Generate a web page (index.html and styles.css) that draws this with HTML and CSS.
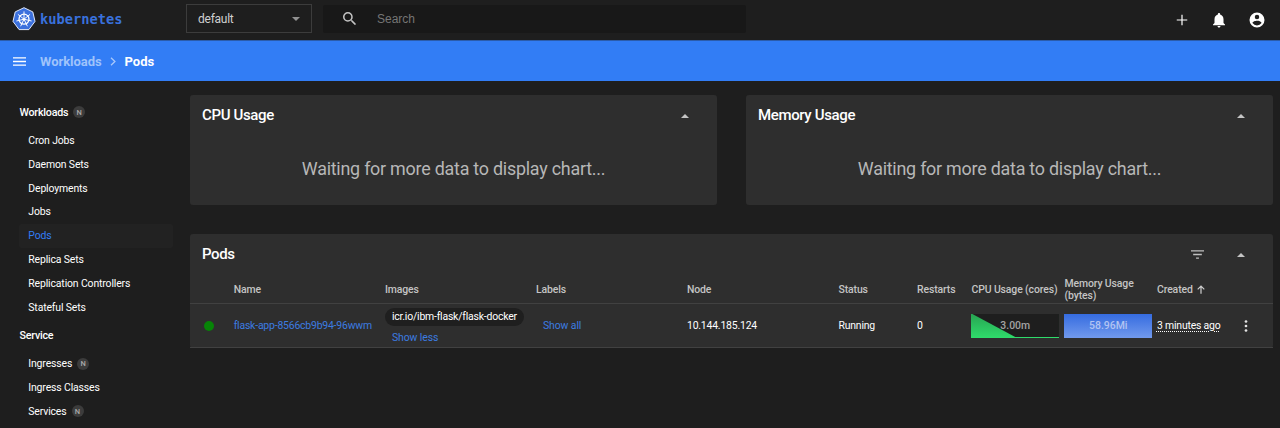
FILE: index.html
```html
<!DOCTYPE html>
<html lang="en">
<head>
<meta charset="utf-8">
<title>Kubernetes Dashboard</title>
<link rel="stylesheet" href="styles.css">
</head>
<body>
<header class="topbar">
  <div class="brand">
    <svg class="brand-logo" viewBox="0 0 24 24">
      <path d="M12 .7 20.8 4.9 23 14.4 16.9 22.6H7.1L1 14.4 3.2 4.9Z" fill="#3b70dd" stroke="#dfe8fb" stroke-width="1" stroke-linejoin="round"/>
      <g stroke="#fff" fill="none" stroke-linecap="round">
        <circle cx="12" cy="12.2" r="5" stroke-width="1.3"/>
        <path stroke-width=".95" d="M12 11V4.8M12.9 11.5 17.8 7.6M13.1 12.5 19.2 13.9M12.5 13.2 15.2 18.9M11.5 13.2 8.8 18.9M10.9 12.5 4.8 13.9M11.1 11.5 6.2 7.6"/>
      </g>
      <circle cx="12" cy="12.2" r="1.3" fill="#fff"/>
    </svg>
    <span class="brand-name">kubernetes</span>
  </div>
  <div class="namespace"><span>default</span><i class="caret-down"></i></div>
  <div class="search">
    <svg class="icon-search" viewBox="3 3 18 18"><path fill="#c4c4c4" d="M15.5 14h-.79l-.28-.27A6.47 6.47 0 0 0 16 9.5 6.5 6.5 0 1 0 9.5 16c1.61 0 3.09-.59 4.23-1.57l.27.28v.79l5 4.99L20.49 19zm-6 0C7.01 14 5 11.99 5 9.5S7.01 5 9.5 5 14 7.01 14 9.5 11.99 14 9.5 14"/></svg>
    <span>Search</span>
  </div>
  <div class="actions">
    <svg class="icon" viewBox="0 0 24 24"><path d="M19 12.8h-6.200v6.200h-1.600v-6.200H5v-1.600h6.200V5h1.600v6.200H19z"/></svg>
    <svg class="icon" viewBox="0 0 24 24"><path d="M12 22c1.1 0 2-.9 2-2h-4c0 1.1.9 2 2 2m6-6v-5c0-3.07-1.63-5.64-4.5-6.32V4c0-.83-.67-1.5-1.5-1.5s-1.500.67-1.500 1.500v.68C7.640 5.360 6 7.920 6 11v5l-2 2v1h16v-1z"/></svg>
    <svg class="icon icon-account" viewBox="0 0 24 24"><path d="M12 2a10 10 0 1 0 0 20 10 10 0 0 0 0-20m0 3a3 3 0 1 1 0 6 3 3 0 0 1 0-6m0 14.200a7.200 7.200 0 0 1-6-3.220c.03-1.990 4-3.080 6-3.080s5.970 1.090 6 3.080a7.200 7.200 0 0 1-6 3.220"/></svg>
  </div>
</header>
<nav class="crumbs">
  <svg class="icon-menu" viewBox="3 6 18 12"><path fill="#fff" d="M3 18h18v-2H3zm0-5h18v-2H3zm0-7v2h18V6z"/></svg>
  <span class="crumb-parent">Workloads</span>
  <svg class="icon-chevron" viewBox="0 0 6 9"><path d="M1 .8 4.900 4.500 1 8.200" fill="none" stroke="#a8c8fb" stroke-width="1.300"/></svg>
  <span class="crumb-current">Pods</span>
</nav>
<div class="layout">
  <aside class="sidebar">
    <div class="group">Workloads <b class="badge">N</b></div>
    <div class="item">Cron Jobs</div>
    <div class="item">Daemon Sets</div>
    <div class="item">Deployments</div>
    <div class="item">Jobs</div>
    <div class="item active">Pods</div>
    <div class="item">Replica Sets</div>
    <div class="item">Replication Controllers</div>
    <div class="item">Stateful Sets</div>
    <div class="group">Service</div>
    <div class="item">Ingresses <b class="badge">N</b></div>
    <div class="item">Ingress Classes</div>
    <div class="item">Services <b class="badge">N</b></div>
  </aside>
  <main class="content">
    <div class="charts">
      <section class="card chart">
        <div class="card-head"><h2>CPU Usage</h2><i class="caret-up"></i></div>
        <p class="waiting">Waiting for more data to display chart...</p>
      </section>
      <section class="card chart">
        <div class="card-head"><h2>Memory Usage</h2><i class="caret-up"></i></div>
        <p class="waiting">Waiting for more data to display chart...</p>
      </section>
    </div>
    <section class="card">
      <div class="card-head">
        <h2>Pods</h2>
        <svg class="icon-filter" viewBox="3 6 18 12"><path fill="#c0c0c0" d="M10 18h4v-2h-4zM3 6v2h18V6zm3 7h12v-2H6z"/></svg>
        <i class="caret-up"></i>
      </div>
      <div class="row row-head">
        <span></span><span>Name</span><span>Images</span><span>Labels</span><span>Node</span><span>Status</span><span>Restarts</span><span>CPU Usage (cores)</span><span>Memory Usage<br>(bytes)</span>
        <span class="sort">Created <svg class="icon-sort" viewBox="0 0 8 9"><path d="M4 8.800V1M.7 4.300 4 1l3.300 3.300" fill="none" stroke="#cfcfcf" stroke-width="1.200"/></svg></span><span></span>
      </div>
      <div class="row row-body">
        <span class="status-dot"></span>
        <a class="pod-name">flask-app-8566cb9b94-96wwm</a>
        <div class="images"><span class="chip">icr.io/ibm-flask/flask-docker</span><a class="toggle">Show less</a></div>
        <a class="toggle">Show all</a>
        <span>10.144.185.124</span>
        <span>Running</span>
        <span>0</span>
        <div class="spark cpu"><span>3.00m</span></div>
        <div class="spark memory"><span>58.96Mi</span></div>
        <span class="age">3 minutes ago</span>
        <svg class="icon-more" viewBox="0 0 4 12"><g fill="#e4e4e4"><circle cx="2" cy="1.500" r="1.350"/><circle cx="2" cy="6" r="1.350"/><circle cx="2" cy="10.500" r="1.350"/></g></svg>
      </div>
    </section>
  </main>
</div>
</body>
</html>
```
FILE: styles.css
```css
* { box-sizing: border-box; }
body { margin: 0; height: 428px; overflow: hidden; background: #1e1e1e; color: #fff; font-family: Roboto, sans-serif; font-size: 10.450px; white-space: nowrap; }
svg { display: block; flex: none; }
.topbar { display: flex; align-items: center; height: 40px; padding-left: 11.500px; background: #1e1e1e; }
.brand { display: flex; align-items: center; width: 174.500px; padding-bottom: 2px; }
.brand-logo { width: 24px; height: 24px; }
.brand-name { margin-left: 4.500px; color: #3971dc; font: bold 13.700px "DejaVu Sans Mono", monospace; }
.namespace { display: flex; align-items: center; justify-content: space-between; width: 126px; height: 29px; margin-bottom: 3px; padding: 0 11px 0 11px; border: 1px solid #3c3c3c; color: #d0d0d0; font-size: 12px; letter-spacing: -.25px; }
.caret-down { border: 4px solid transparent; border-top-color: #929292; border-bottom: 0; }
.search { display: flex; align-items: center; width: 423px; height: 28px; margin: 0 0 3px 11px; padding-left: 19.500px; border-radius: 2px; background: #181818; color: #757575; font: 12px "Liberation Sans", Arial, sans-serif; }
.icon-search { width: 13.500px; height: 13.500px; margin-right: 21px; }
.actions { display: flex; gap: 19.700px; margin-left: auto; padding-right: 14px; }
.icon { width: 18px; height: 18px; fill: #fff; }
.crumbs { display: flex; align-items: center; height: 41px; padding-left: 13px; background: #327df5; border-top: 1px solid #2b5cab; font-size: 13px; font-weight: 700; letter-spacing: -.04px; }
.icon-menu { width: 13px; height: 9px; }
.crumb-parent { margin-left: 14px; color: #9fc3fb; }
.icon-chevron { width: 6px; height: 9px; margin: 0 8.500px; }
.layout { display: flex; height: 347px; }
.sidebar { width: 190px; padding: 15.300px 17px 0 19px; }
.group, .item { display: flex; align-items: center; height: 23.850px; }
.group { margin: 4.300px 0; padding-left: .5px; font-weight: 500; font-size: 10.700px; letter-spacing: -.22px; }
.group:first-child { margin-top: 4px; }
.item { padding-left: 9.300px; border-radius: 2px; letter-spacing: -.14px; }
.active { background: #222; color: #327df5; }
.badge { display: inline-flex; align-items: center; justify-content: center; width: 12px; height: 12px; margin-left: 5px; border-radius: 50%; background: #3c3c3c; color: #aaa; font-size: 7.500px; font-weight: 500; letter-spacing: 0; }
.content { width: 1083px; padding-top: 14px; }
.charts { display: grid; grid-template-columns: 1fr 1fr; gap: 29px; margin-bottom: 29px; }
.card { border-radius: 3px; background: #2e2e2e; }
.chart { height: 110px; }
.card-head { display: flex; align-items: center; height: 41px; padding: 0 28px 0 12px; }
h2 { margin: 0 auto 0 0; padding-bottom: 1px; font-size: 15px; font-weight: 500; letter-spacing: -.36px; }
.caret-up { border: 4px solid transparent; border-bottom-color: #c4c4c4; border-top: 0; }
.waiting { margin: 22px 0 0; color: #b7b7b7; font-size: 17.900px; line-height: 22px; letter-spacing: -.235px; text-align: center; }
.icon-filter { width: 13px; height: 9px; margin-right: 33px; }
.row { display: grid; grid-template-columns: 43.700px 151.300px 151px 151px 151.500px 78.500px 54.500px 93px 92.500px 87px 1fr; align-items: center; border-bottom: 1px solid #414141; letter-spacing: -.2px; }
.row-head { height: 29px; padding-top: 1px; color: #c4c4c4; font-weight: 500; line-height: 12px; letter-spacing: -.12px; }
.sort { display: flex; align-items: center; }
.icon-sort { width: 8px; height: 9px; margin-left: 4px; }
.row-body { height: 44px; }
.status-dot { width: 10px; height: 10px; margin-left: 14px; border-radius: 50%; background: #078407; }
.pod-name, .toggle { color: #3c7ce0; }
.toggle { padding-left: 7px; letter-spacing: -.1px; }
.images { display: flex; flex-direction: column; align-items: flex-start; gap: 5px; }
.chip { height: 18px; padding: 0 7px; border-radius: 9px; background: #1f1f1f; line-height: 18px; }
.spark { display: flex; align-items: center; justify-content: center; width: 87.500px; height: 24px; color: #a3a3a3; font-weight: 500; letter-spacing: 0; }
.cpu { background: linear-gradient(#28a452, #2fdc6b); position: relative; }
.cpu::before { content: ""; position: absolute; inset: 0; background: #1e1e1e; clip-path: polygon(0 0, 100% 0, 100% 98%, 50% 98%); }
.cpu span { position: relative; }
.memory { background: linear-gradient(#356ce0, #7199ec); color: #b2c4f2; }
.age { justify-self: start; text-decoration: underline dotted; text-underline-offset: 2px; text-decoration-thickness: 1px; }
.icon-more { width: 4px; height: 12px; margin-left: .5px; }
```
